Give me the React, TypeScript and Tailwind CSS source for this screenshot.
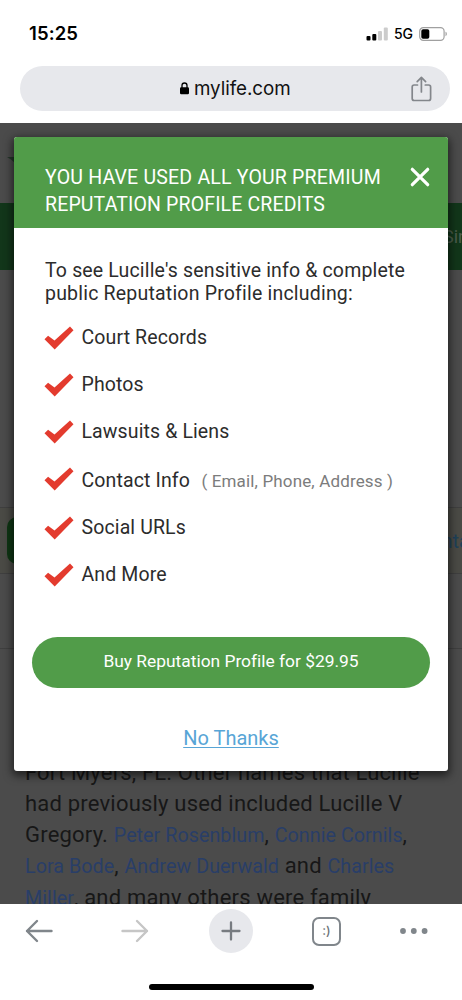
import type { ReactNode } from "react";
import clsx from "clsx";

const benefits: { label: string; note?: string; height: string }[] = [
  { label: "Court Records", height: "h-[47px]" },
  { label: "Photos", height: "h-[47px]" },
  { label: "Lawsuits & Liens", height: "h-[47px]" },
  { label: "Contact Info", note: "( Email, Phone, Address )", height: "h-[49px]" },
  { label: "Social URLs", height: "h-[47px]" },
  { label: "And More", height: "h-[47px]" },
];

const StatusBar = () => (
  <div className="flex h-[66px] items-center justify-between pt-[2px] pl-[29px] pr-[14px]">
    <span className="font-[Inter] text-[18.5px] font-semibold tracking-[0.1px] text-black">15:25</span>
    <div className="flex items-center">
      <svg width="22" height="14" viewBox="0 0 22 14">
        <rect x="0.5" y="9" width="4" height="4.5" rx="1" fill="#000" />
        <rect x="6.3" y="7" width="4" height="6.5" rx="1" fill="#000" />
        <rect x="12" y="4" width="4" height="9.5" rx="1" fill="#ccc" />
        <rect x="17.8" y="0.5" width="4" height="13" rx="1" fill="#ccc" />
      </svg>
      <span className="ml-[6px] font-[Inter] text-[14px] font-medium leading-none text-black">5G</span>
      <svg className="ml-[6px]" width="29" height="14" viewBox="0 0 29 14">
        <rect x="0.7" y="0.7" width="24.4" height="12.6" rx="3.6" fill="none" stroke="#a0a0a0" strokeWidth="1.2" />
        <rect x="2.3" y="2.3" width="8" height="9.4" rx="1.8" fill="#000" />
        <path d="M26.5 4.8c1.8.5 1.8 3.9 0 4.4z" fill="#a0a0a0" />
      </svg>
    </div>
  </div>
);

const AddressBar = () => (
  <div className="relative mr-[12.5px] ml-[20px] flex h-[44.5px] items-center justify-center rounded-full bg-[#e7e8ec]">
    <svg className="mt-px mr-[5px] ml-px" width="9" height="13" viewBox="0 0 9 13">
      <path d="M2 6V3.5a2.5 2.5 0 0 1 5 0V6" fill="none" stroke="#000" strokeWidth="1.3" />
      <rect x="0" y="5.2" width="9" height="7" rx="1.2" fill="#000" />
    </svg>
    <span className="mt-px font-[Inter] text-[18.8px] tracking-[-0.05px] text-[#111]">mylife.com</span>
    <svg
      className="absolute right-[18px] top-[9.5px]"
      width="21"
      height="27"
      viewBox="0 0 21 27"
      fill="none"
      stroke="#83868b"
      strokeWidth="1.7"
      strokeLinecap="round"
      strokeLinejoin="round"
    >
      <path d="M6.5 9H3.2a2 2 0 0 0-2 2v11.500a2 2 0 0 0 2 2h14.400a2 2 0 0 0 2-2V11a2 2 0 0 0-2-2h-3.300" />
      <path d="M10.400 16V1.800M6.200 5.600l4.200-4.200 4.200 4.200" />
    </svg>
  </div>
);

const NameLink = ({ children }: { children: ReactNode }) => (
  <a className="text-[19.7px] tracking-[0.05px] text-[#293e68]">{children}</a>
);

/** Profile page as it shows through the modal backdrop. */
const DimmedProfile = () => (
  <div className="flex h-full flex-col bg-[#4b4b4b]">
    <div className="flex h-[80px] shrink-0 items-start pt-[34px]">
      <svg className="ml-[7px]" width="8" height="8" viewBox="0 0 8 8">
        <path d="M0 0h8v6L4 2.500z" fill="#24362a" />
      </svg>
    </div>
    <div className="flex h-[67px] shrink-0 items-center justify-end overflow-hidden bg-[#12361a]">
      <span className="-mr-[6px] text-[18px] text-[#4a5c4c]">Sin</span>
    </div>
    <div className="h-[237px] shrink-0" />
    <div className="flex h-[67px] shrink-0 items-center justify-between overflow-hidden border-y border-[#3f3f3f] bg-[#4a4a45]">
      <div className="ml-[7px] h-[47px] w-[60px] rounded-[10px] bg-[#0f3614]" />
      <span className="-mr-[8px] text-[20px] text-[#1f4158]">nta</span>
    </div>
    <div className="h-[75px] shrink-0 border-b border-[#3f3f3f]" />
    <p className="mt-[109px] whitespace-nowrap pl-[25px] text-[22px] leading-[30.8px] text-[#171717]">
      <span className="block tracking-[0.17px]">Fort Myers, FL. Other names that Lucille</span>
      <span className="block tracking-[0.2px]">had previously used included Lucille V</span>
      <span className="block tracking-[0.2px]">
        Gregory. <NameLink>Peter Rosenblum</NameLink>, <NameLink>Connie Cornils</NameLink>,
      </span>
      <span className="block tracking-[0.2px]">
        <NameLink>Lora Bode</NameLink>, <NameLink>Andrew Duerwald</NameLink> and <NameLink>Charles</NameLink>
      </span>
      <span className="block tracking-[0.2px]">
        <NameLink>Miller</NameLink>, and many others were family
      </span>
    </p>
  </div>
);

const CheckMark = () => (
  <svg className="mt-[5px] shrink-0" width="30" height="24" viewBox="0 0 30 24">
    <path d="M0.500 13.200 4.100 9.700 10.500 14.500 26 0.500 29.500 4.300 10.700 23.500z" fill="#e33b2e" />
  </svg>
);

const CreditsModal = () => (
  <div className="absolute left-[14px] top-[14px] flex h-[634px] w-[434px] flex-col overflow-hidden rounded-[3px] bg-white shadow-[0_3px_9px_2px_rgba(0,0,0,0.55)]">
    <div className="flex h-[91px] justify-between bg-[#519c49] pl-[31px] pr-[18px] pt-[26px]">
      <h2 className="whitespace-nowrap pt-px text-[19.5px] leading-[27px] text-white">
        <span className="block tracking-[0.2px]">YOU HAVE USED ALL YOUR PREMIUM</span>
        <span className="block tracking-[0.14px]">REPUTATION PROFILE CREDITS</span>
      </h2>
      <svg className="mt-[4px]" width="20" height="20" viewBox="0 0 20 20" stroke="#fff" strokeWidth="3.2" strokeLinecap="round">
        <path d="M2.300 2.300 17.700 17.700M17.700 2.300 2.300 17.700" />
      </svg>
    </div>
    <p className="whitespace-nowrap pl-[31px] pt-[32px] text-[19.5px] leading-[22.500px] text-[#2c2c2c]">
      <span className="block tracking-[0.16px]">To see Lucille's sensitive info &amp; complete</span>
      <span className="block tracking-[0.2px]">public Reputation Profile including:</span>
    </p>
    <ul className="mt-[16px] pl-[30px]">
      {benefits.map(({ label, note, height }) => (
        <li key={label} className={clsx("flex items-start", height)}>
          <CheckMark />
          <span
            className={clsx(
              "ml-[7.5px] whitespace-nowrap text-[19.5px] leading-[30px] tracking-[0.12px] text-[#2c2c2c]",
              note ? "mt-[3.5px]" : "mt-[1.5px]",
            )}
          >
            {label}
            {note && <span className="ml-[11.5px] text-[17px] tracking-[0.15px] text-[#7c7c7c]">{note}</span>}
          </span>
        </li>
      ))}
    </ul>
    <button className="mx-[18px] mt-[32px] h-[51px] shrink-0 rounded-full bg-[#519c49] pb-[2px] text-[17.4px] tracking-[-0.01px] text-white">
      Buy Reputation Profile for $29.95
    </button>
    <a className="mt-[38px] self-center text-[20px] leading-[24px] text-[#58a5d6] underline decoration-1 underline-offset-2">
      No Thanks
    </a>
  </div>
);

const BottomBar = () => (
  <div className="relative h-[96px] bg-white">
    <div className="flex h-[54px] items-center">
      <svg className="ml-[25px]" width="28" height="24" viewBox="0 0 28 24" fill="none" stroke="#80868b" strokeWidth="2.4" strokeLinecap="round" strokeLinejoin="round">
        <path d="M26.500 12H2M12 2 2 12l10 10" />
      </svg>
      <svg className="ml-[68px]" width="28" height="24" viewBox="0 0 28 24" fill="none" stroke="#c6c6c6" strokeWidth="2.4" strokeLinecap="round" strokeLinejoin="round">
        <path d="M1.500 12H26M16 2l10 10-10 10" />
      </svg>
      <div className="ml-[60px] flex size-[44px] items-center justify-center rounded-full bg-[#e7e8ec]">
        <svg width="20" height="20" viewBox="0 0 20 20" stroke="#777b80" strokeWidth="2.3" strokeLinecap="round">
          <path d="M10 1.500v17M1.500 10h17" />
        </svg>
      </div>
      <div className="ml-[59px] flex size-[29px] items-center justify-center rounded-[7px] border-2 border-[#80868b] pt-px font-[Inter] text-[12.500px] font-medium text-[#6d7277]">
        :)
      </div>
      <svg className="ml-[59px]" width="28" height="6" viewBox="0 0 28 6" fill="#80868b">
        <circle cx="3" cy="3" r="2.900" />
        <circle cx="13.800" cy="3" r="2.900" />
        <circle cx="24.600" cy="3" r="2.900" />
      </svg>
    </div>
    <div className="mx-auto mt-[26px] h-[6px] w-[165px] rounded-full bg-black" />
  </div>
);

export default function App() {
  return (
    <div className="flex h-[1000px] w-[462px] flex-col overflow-hidden bg-white font-[Roboto,sans-serif]">
      <header className="h-[123px] shrink-0">
        <StatusBar />
        <AddressBar />
      </header>
      <main className="relative h-[781px] shrink-0 overflow-hidden">
        <DimmedProfile />
        <CreditsModal />
      </main>
      <BottomBar />
    </div>
  );
}
